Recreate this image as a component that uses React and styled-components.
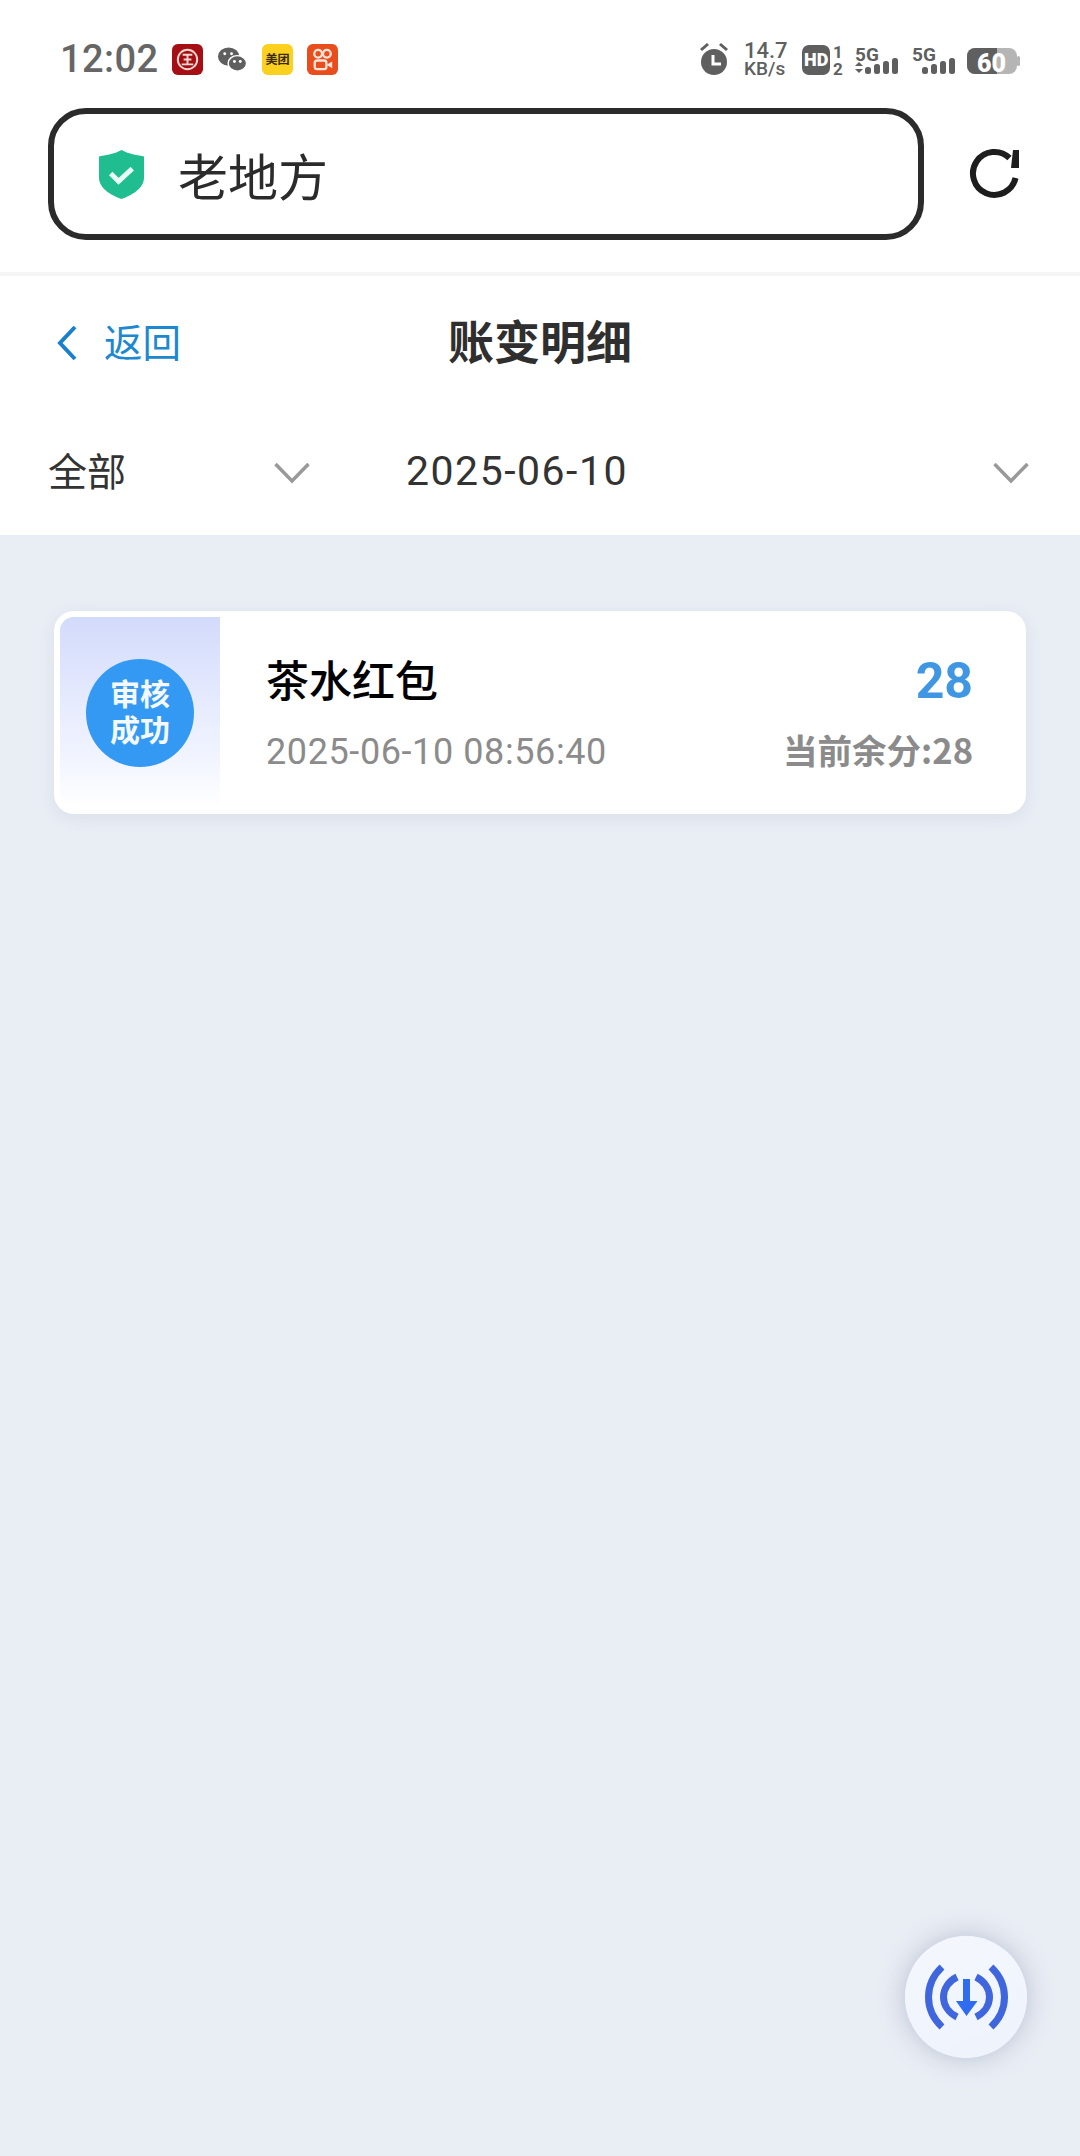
import React from 'react';
import styled, { createGlobalStyle } from 'styled-components';

const GlobalStyle = createGlobalStyle`
  html, body {
    margin: 0;
    padding: 0;
    background: #e9edf4;
  }
  * { box-sizing: border-box; }
`;

const cjk = `"Noto Sans CJK SC", "Noto Sans", sans-serif`;

const Page = styled.div`
  position: relative;
  width: 1080px;
  height: 2156px;
  overflow: hidden;
  background: #e9edf4;
  font-family: ${cjk};
`;

const Head = styled.div`
  background: #fff;
  height: 535px;
`;

const StatusBar = styled.div`
  height: 108px;
  padding: 10px 54px 0 60px;
  display: flex;
  align-items: center;
  justify-content: space-between;
`;

const StatusLeft = styled.div`
  display: flex;
  align-items: center;
  gap: 14px;
`;

const Time = styled.span`
  font-family: Roboto, sans-serif;
  font-size: 38px;
  font-weight: 500;
  letter-spacing: 0.4px;
  color: #666;
`;

const AppIcon = styled.svg`
  width: 31px;
  height: 31px;
  display: block;
`;

const StatusRight = styled.svg`
  width: 330px;
  height: 44px;
  display: block;
`;

const StatusText = styled.text`
  font-family: Roboto, sans-serif;
  font-size: ${p => p.$size}px;
  font-weight: ${p => p.$weight};
  fill: ${p => p.$fill || '#5f5f5f'};
`;

const UrlRow = styled.div`
  display: flex;
  align-items: flex-start;
  padding-left: 48px;
  height: 168px;
  border-bottom: 4px solid #f5f5f5;
`;

const UrlBox = styled.div`
  width: 876px;
  height: 132px;
  border: 6px solid #2b2b2b;
  border-radius: 38px;
  display: flex;
  align-items: center;
  padding-left: 44px;
`;

const UrlText = styled.span`
  margin-left: 33px;
  font-size: 50px;
  color: #2b2b2b;
  line-height: 1;
`;

const ReloadButton = styled.svg`
  width: 56px;
  height: 56px;
  margin: 38px 0 0 43px;
  display: block;
`;

const NavBar = styled.div`
  display: grid;
  grid-template-columns: 1fr auto 1fr;
  align-items: center;
  height: 134px;
  padding-left: 56px;
  padding-right: 56px;
`;

const Back = styled.div`
  display: flex;
  align-items: center;
  gap: 26px;
  color: #1c88cf;
  font-size: 38.500px;
`;

const BackLabel = styled.span`
  margin-top: -6px;
`;

const NavTitle = styled.div`
  padding-bottom: 8px;
  font-size: 46px;
  font-weight: 700;
  color: #2f2f2f;
  text-align: center;
`;

const Filters = styled.div`
  display: grid;
  grid-template-columns: 310px 1fr;
  height: 125px;
`;

const Filter = styled.div`
  display: flex;
  align-items: center;
  justify-content: space-between;
  padding: ${p => p.$pad};
  color: #333;
  font-size: ${p => (p.$latin ? 41 : 39)}px;
  letter-spacing: ${p => (p.$latin ? 1.5 : 0)}px;
  font-family: ${p => (p.$latin ? 'Roboto, sans-serif' : cjk)};
`;

const FilterLabel = styled.span`
  margin-top: ${p => (p.$latin ? -3 : -7)}px;
`;

const Chevron = styled.svg`
  width: 36px;
  height: 22px;
  display: block;
`;

const Main = styled.div`
  padding: 76px 54px 0;
`;

const Card = styled.div`
  height: 203px;
  background: #fff;
  border-radius: 20px;
  padding: 6px;
  display: flex;
  box-shadow: 0 4px 16px rgba(90, 110, 160, 0.1);
`;

const Stamp = styled.div`
  width: 160px;
  height: 191px;
  flex: none;
  border-radius: 14px 0 0 14px;
  background: linear-gradient(180deg, #d3dbfb 0%, #f2f5ff 75%, #ffffff 100%);
  display: flex;
  align-items: flex-start;
  justify-content: center;
  padding-top: 42px;
`;

const Circle = styled.div`
  width: 108px;
  height: 108px;
  padding-bottom: 6px;
  border-radius: 50%;
  background: #3399f3;
  color: #f4f9ff;
  font-size: 30px;
  font-weight: 700;
  line-height: 36px;
  text-align: center;
  display: flex;
  align-items: center;
  justify-content: center;
`;

const CardBody = styled.div`
  flex: 1;
  display: flex;
  justify-content: space-between;
  padding: 33px 47px 0 46px;
`;

const Column = styled.div`
  display: flex;
  flex-direction: column;
  align-items: ${p => (p.$end ? 'flex-end' : 'flex-start')};
`;

const ItemTitle = styled.div`
  font-size: 43px;
  font-weight: 500;
  line-height: 56px;
  color: #000;
`;

const ItemDate = styled.div`
  margin-top: 25px;
  font-family: Roboto, sans-serif;
  font-size: 36px;
  line-height: 42px;
  letter-spacing: 0.6px;
  color: #8b8b8b;
`;

const Amount = styled.div`
  margin-top: 3px;
  font-family: Roboto, sans-serif;
  font-size: 50px;
  font-weight: 700;
  line-height: 56px;
  color: #3f97e3;
`;

const Balance = styled.div`
  margin-top: 19px;
  font-size: 34.500px;
  font-weight: 700;
  line-height: 42px;
  color: #8b8b8b;
`;

const Fab = styled.div`
  position: absolute;
  left: 905px;
  top: 1936px;
  width: 122px;
  height: 122px;
  border-radius: 50%;
  background: linear-gradient(160deg, #f4f7fd, #eef3fc);
  box-shadow: 0 0 26px rgba(110, 125, 160, 0.4);
  display: flex;
  align-items: center;
  justify-content: center;
`;

const bars = [
  [0, 30, 7],
  [9, 27, 10],
  [18, 24, 13],
  [27, 21, 16],
];

function SignalBars({ x }) {
  return (
    <g fill="#5f5f5f">
      {bars.map(([dx, y, h]) => (
        <rect key={dx} x={x + dx} y={y} width="6" height={h} rx="2.500" />
      ))}
    </g>
  );
}

function StatusIcons() {
  return (
    <StatusRight viewBox="0 0 330 44">
      <g fill="#5f5f5f">
        <circle cx="18" cy="25" r="13" />
        <path d="M4 12l7-6 2 2-7 6zM32 12l-7-6-2 2 7 6z" />
      </g>
      <path d="M17 18v9h8" stroke="#fff" strokeWidth="3" fill="none" />
      <StatusText x="48" y="21" $size={22} $weight={500}>14.7</StatusText>
      <StatusText x="48" y="38" $size={19} $weight={500}>KB/s</StatusText>
      <rect x="106" y="8" width="28" height="30" rx="7" fill="#5f5f5f" />
      <StatusText x="108" y="29" $size={18} $weight={900} $fill="#fff">HD</StatusText>
      <StatusText x="137" y="21" $size={17} $weight={700}>1</StatusText>
      <StatusText x="137" y="38" $size={17} $weight={700}>2</StatusText>
      <StatusText x="159" y="24" $size={19} $weight={700}>5G</StatusText>
      <path d="M163 25l4 4h-8zM163 36l4-4h-8z" fill="#5f5f5f" />
      <SignalBars x={169} />
      <StatusText x="216" y="24" $size={19} $weight={700}>5G</StatusText>
      <SignalBars x={226} />
      <rect x="271" y="11" width="50" height="26" rx="8" fill="#b5b5b5" />
      <path d="M279 11h22v26h-22a8 8 0 0 1-8-8v-10a8 8 0 0 1 8-8z" fill="#5f5f5f" />
      <rect x="321" y="19" width="3" height="10" rx="1.500" fill="#b5b5b5" />
      <StatusText x="281" y="35" $size={25} $weight={900} $fill="#fff">60</StatusText>
    </StatusRight>
  );
}

export default function App() {
  return (
    <Page>
      <GlobalStyle />
      <Head>
        <StatusBar>
          <StatusLeft>
            <Time>12:02</Time>
            <AppIcon viewBox="0 0 32 32">
              <rect width="32" height="32" rx="6" fill="#a50f13" />
              <circle cx="16" cy="16" r="10" fill="none" stroke="#f4d7d0" strokeWidth="2" />
              <path d="M11 11h10M12 16h8M10 21h12M16 11v10" stroke="#f4d7d0" strokeWidth="2" fill="none" />
            </AppIcon>
            <AppIcon viewBox="0 0 32 32">
              <ellipse cx="12" cy="13" rx="11" ry="9.500" fill="#5f5f5f" />
              <ellipse cx="21" cy="20" rx="9.500" ry="8" fill="#5f5f5f" stroke="#fff" strokeWidth="1.500" />
              <circle cx="18" cy="18" r="1.500" fill="#fff" />
              <circle cx="24" cy="18" r="1.500" fill="#fff" />
              <circle cx="8" cy="10" r="1.500" fill="#fff" />
              <circle cx="15" cy="10" r="1.500" fill="#fff" />
            </AppIcon>
            <AppIcon viewBox="0 0 32 32">
              <rect width="32" height="32" rx="6" fill="#fbd01f" />
              <text x="16" y="21" textAnchor="middle" fontSize="12.500" fontWeight="700" fill="#3a2a10" fontFamily={cjk}>美团</text>
            </AppIcon>
            <AppIcon viewBox="0 0 32 32">
              <rect width="32" height="32" rx="6" fill="#ea4d1c" />
              <circle cx="11.500" cy="10" r="4" fill="none" stroke="#fde4d8" strokeWidth="2.400" />
              <circle cx="20.500" cy="10" r="4" fill="none" stroke="#fde4d8" strokeWidth="2.400" />
              <rect x="8" y="17" width="12" height="9" rx="2.500" fill="none" stroke="#fde4d8" strokeWidth="2.400" />
              <path d="M21 21l5-3v7l-5-3z" fill="#fde4d8" />
            </AppIcon>
          </StatusLeft>
          <StatusIcons />
        </StatusBar>
        <UrlRow>
          <UrlBox>
            <svg width="47" height="49" viewBox="0 0 48 50">
              <path d="M24 0c7 4 14 5 23 6.500V28c0 11-12 18-23 22C13 46 1 39 1 28V6.500C10 5 17 4 24 0z" fill="#1fbd8f" />
              <path d="M13 24l8 8 14-13" fill="none" stroke="#e9fff6" strokeWidth="5" />
            </svg>
            <UrlText>老地方</UrlText>
          </UrlBox>
          <ReloadButton viewBox="0 0 56 56">
            <path d="M48.500 32A21.500 21.500 0 1 1 42.500 12" fill="none" stroke="#1d1d1d" strokeWidth="6" />
            <path d="M46 4h6v18h-8z" fill="#1d1d1d" />
          </ReloadButton>
        </UrlRow>
        <NavBar>
          <Back>
            <svg width="22" height="36" viewBox="0 0 22 36">
              <path d="M19 2L4 18l15 16" fill="none" stroke="#1a80cc" strokeWidth="4" />
            </svg>
            <BackLabel>返回</BackLabel>
          </Back>
          <NavTitle>账变明细</NavTitle>
          <div />
        </NavBar>
        <Filters>
          <Filter $pad="0 0 0 48px">
            <FilterLabel>全部</FilterLabel>
            <Chevron viewBox="0 0 36 22">
              <path d="M1.500 2L18 19 34.500 2" fill="none" stroke="#999" strokeWidth="3.500" />
            </Chevron>
          </Filter>
          <Filter $pad="0 51px 0 96px" $latin>
            <FilterLabel $latin>2025-06-10</FilterLabel>
            <Chevron viewBox="0 0 36 22">
              <path d="M1.500 2L18 19 34.500 2" fill="none" stroke="#999" strokeWidth="3.500" />
            </Chevron>
          </Filter>
        </Filters>
      </Head>
      <Main>
        <Card>
          <Stamp>
            <Circle>审核<br />成功</Circle>
          </Stamp>
          <CardBody>
            <Column>
              <ItemTitle>茶水红包</ItemTitle>
              <ItemDate>2025-06-10 08:56:40</ItemDate>
            </Column>
            <Column $end>
              <Amount>28</Amount>
              <Balance>当前余分:28</Balance>
            </Column>
          </CardBody>
        </Card>
      </Main>
      <Fab>
        <svg width="84" height="70" viewBox="0 0 84 70">
          <g fill="none" stroke="#3f66dc" strokeWidth="7">
            <path d="M18 5C0 22 0 48 18 65" />
            <path d="M67 5c18 17 18 43 0 60" />
            <path d="M33 15C15 24 15 46 33 55" />
            <path d="M52 15c18 9 18 31 0 40" />
          </g>
          <path d="M39 17h7v22h7.500L42.500 54 32 39h7z" fill="#2f6cf0" />
        </svg>
      </Fab>
    </Page>
  );
}
